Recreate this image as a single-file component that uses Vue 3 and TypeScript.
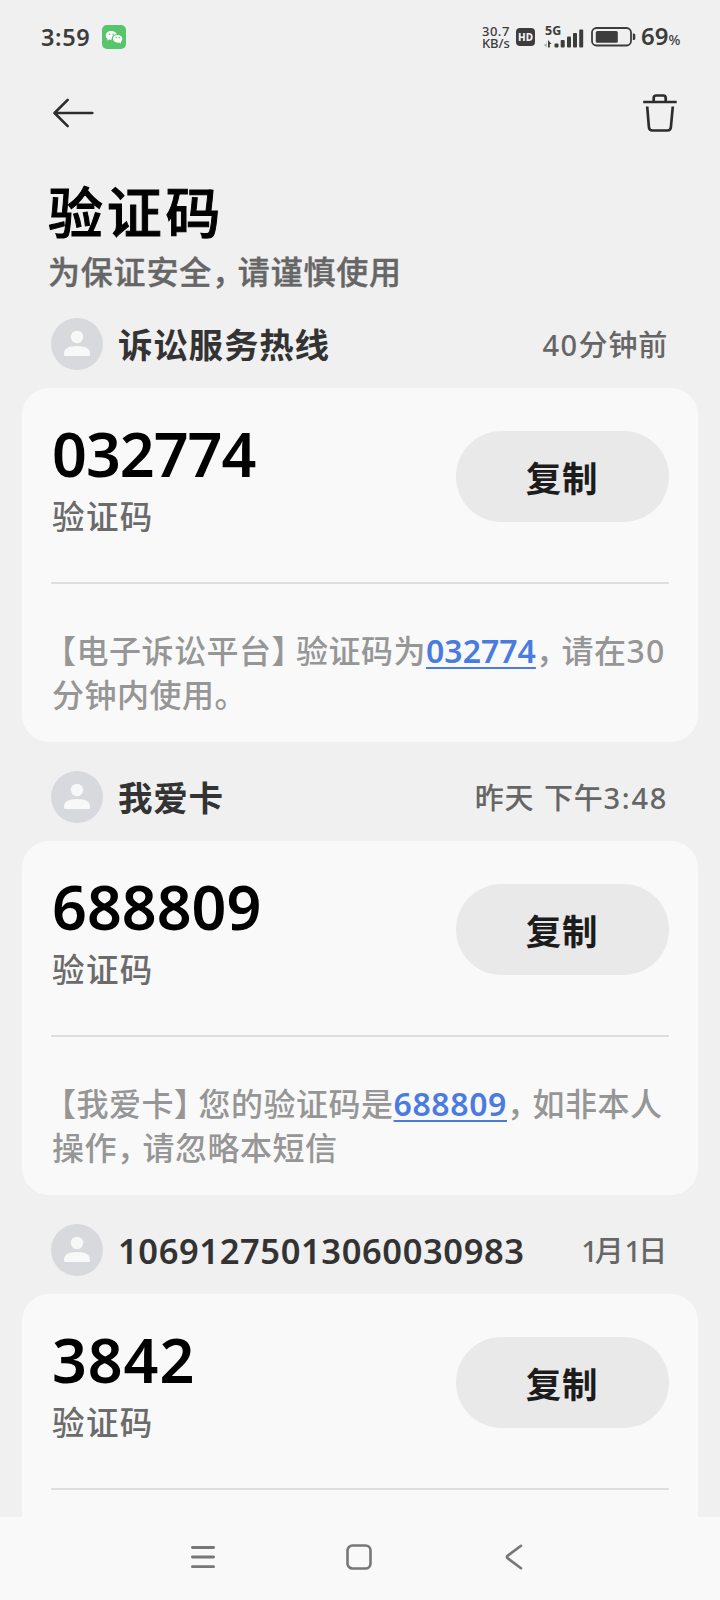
<script setup lang="ts">
interface Segment {
  text: string
  kind?: 'open' | 'close' | 'comma' | 'link' | 'digits'
  spacing?: number
}

interface Message {
  sender: string
  senderSpacing: number
  time: Segment[]
  code: string
  codeSpacing: number
  lines: Segment[][]
}

const messages: Message[] = [
  {
    sender: '诉讼服务热线',
    senderSpacing: 0.8,
    time: [{ text: '40', kind: 'digits', spacing: 1.4 }, { text: '分钟前' }],
    code: '032774',
    codeSpacing: -1,
    lines: [
      [
        { text: '【', kind: 'open' },
        { text: '电子诉讼平台' },
        { text: '】', kind: 'close' },
        { text: '验证码为' },
        { text: '032774', kind: 'link', spacing: 0 },
        { text: '，', kind: 'comma' },
        { text: '请在' },
        { text: '30', kind: 'digits', spacing: 1.2 },
      ],
      [{ text: '分钟内使用。' }],
    ],
  },
  {
    sender: '我爱卡',
    senderSpacing: 0.7,
    time: [
      { text: '昨天' },
      { text: ' ', kind: 'digits', spacing: 2 },
      { text: '下午' },
      { text: '3:48', kind: 'digits', spacing: 1.7 },
    ],
    code: '688809',
    codeSpacing: 0,
    lines: [
      [
        { text: '【', kind: 'open' },
        { text: '我爱卡' },
        { text: '】', kind: 'close' },
        { text: '您的验证码是' },
        { text: '688809', kind: 'link', spacing: 0.6 },
        { text: '，', kind: 'comma' },
        { text: '如非本人' },
      ],
      [
        { text: '操作' },
        { text: '，', kind: 'comma' },
        { text: '请忽略本短信' },
      ],
    ],
  },
  {
    sender: '10691275013060030983',
    senderSpacing: 0.6,
    time: [
      { text: '1', kind: 'digits', spacing: -3 },
      { text: '月' },
      { text: '1', kind: 'digits', spacing: -3 },
      { text: '日' },
    ],
    code: '3842',
    codeSpacing: 0.9,
    lines: [],
  },
]

const spacing = (n?: number) => (n === undefined ? {} : { letterSpacing: n + 'px' })
</script>

<template>
  <div class="screen">
    <header class="status">
      <span class="clock">3:59</span>
      <svg class="wechat" width="24" height="24" viewBox="0 0 24 24">
        <rect width="24" height="24" rx="5" fill="#57c56b" />
        <path fill="#fff" d="M9.2 6C6 6 3.8 8 3.8 10.5c0 1.4.7 2.6 1.8 3.4l-.4 1.8 2-1.1c.8.2 1.6.3 2.5.2-.6-3.2 2-5.7 5.2-5.6C14.3 7.3 12 6 9.2 6z" />
        <path fill="#fff" d="M20.3 13.8c0-2.2-2-3.9-4.6-3.9s-4.7 1.7-4.7 3.9 2.1 3.9 4.7 3.9c.6 0 1.2-.1 1.700-.2l1.700.9-.4-1.500c1-.8 1.600-1.900 1.600-3.100z" />
        <g fill="#57c56b"><circle cx="7.500" cy="9.200" r=".8" /><circle cx="11" cy="9.200" r=".8" /><circle cx="14.200" cy="12.700" r=".7" /><circle cx="17.300" cy="12.700" r=".7" /></g>
      </svg>
      <span class="grow"></span>
      <span class="rate"><span class="rate-value">30.7</span><span>KB/s</span></span>
      <span class="hd">HD</span>
      <span class="network">
        <span class="gen">5G</span>
        <svg width="42" height="22" viewBox="0 0 42 22" fill="#3c3c3c">
          <path d="M3.500 14v7.500L.8 18.500H3z" fill="#999" />
          <path d="M5 21.500V14l3.500 4H6.800v3.500z" />
          <rect x="11.500" y="17.500" width="4" height="4" rx="1" />
          <rect x="17.700" y="14" width="4" height="7.500" rx="1" />
          <rect x="24" y="10.500" width="4" height="11" rx="1" />
          <rect x="30" y="7" width="4" height="14.500" rx="1" />
          <rect x="36.200" y="3.500" width="4" height="18" rx="1" />
        </svg>
      </span>
      <svg class="battery" width="45" height="20" viewBox="0 0 45 20">
        <rect x="1" y="1" width="39" height="17.500" rx="4.500" fill="none" stroke="#3c3c3c" stroke-width="1.800" />
        <rect x="4.800" y="4" width="22" height="11.800" rx="1.500" fill="#3c3c3c" />
        <path d="M41.800 6.500h1a1.500 1.500 0 0 1 1.500 1.500v3.500a1.500 1.500 0 0 1-1.500 1.500h-1z" fill="#3c3c3c" />
      </svg>
      <span class="percent">69<small>%</small></span>
    </header>

    <nav class="toolbar">
      <svg width="42" height="32" viewBox="0 0 42 32" fill="none" stroke="#2d2d2d" stroke-width="2.600" stroke-linecap="round" stroke-linejoin="round">
        <path d="M15.700 2.800 2.500 16l13.200 13.200M2.500 16h37.800" />
      </svg>
      <svg width="36" height="40" viewBox="0 0 36 40" fill="none" stroke="#2d2d2d" stroke-width="2.700" stroke-linejoin="round">
        <path d="M1.200 9h33.500M11.700 8.500V5q0-2.500 2.500-2.500h7q2.500 0 2.500 2.500V8.500" />
        <path d="M5.200 13.500l1.700 20.500q.2 3.500 3.500 3.500h15q3.300 0 3.500-3.500L30.800 13.500" />
      </svg>
    </nav>

    <section class="heading">
      <h1>验证码</h1>
      <p>为保证安全<span class="comma">，</span>请谨慎使用</p>
    </section>

    <main class="list">
      <article v-for="m in messages" :key="m.code" class="item">
        <div class="item-head">
          <svg class="avatar" width="52" height="52" viewBox="0 0 52 52">
            <circle cx="26" cy="26" r="26" fill="#d8d9dc" />
            <circle cx="26" cy="19" r="6.200" fill="#f8f8f9" />
            <path d="M13 35.500q0-7.500 13-7.500t13 7.500v1q0 1.500-1.500 1.500h-23q-1.500 0-1.500-1.500z" fill="#f8f8f9" />
          </svg>
          <span class="sender" :style="spacing(m.senderSpacing)">{{ m.sender }}</span>
          <span class="time"><span v-for="(s, i) in m.time" :key="i" :style="spacing(s.spacing)">{{ s.text }}</span></span>
        </div>
        <div class="card">
          <div class="summary">
            <div class="code-block">
              <div class="code" :style="spacing(m.codeSpacing)">{{ m.code }}</div>
              <div class="label">验证码</div>
            </div>
            <button class="copy" type="button">复制</button>
          </div>
          <div class="message">
            <div v-for="(line, i) in m.lines" :key="i" class="line"><span v-for="(s, j) in line" :key="j" :class="s.kind" :style="spacing(s.spacing)">{{ s.text }}</span></div>
          </div>
        </div>
      </article>
    </main>

    <footer class="navbar">
      <svg width="26" height="26" viewBox="0 0 26 26" stroke="#777" stroke-width="2.800" stroke-linecap="round">
        <path d="M2.400 3.500h21.200M2.400 13h21.200M2.400 22.700h21.200" />
      </svg>
      <svg width="26" height="26" viewBox="0 0 26 26" fill="none" stroke="#777" stroke-width="2.600">
        <rect x="1.500" y="1.500" width="23" height="23" rx="5" />
      </svg>
      <svg width="26" height="26" viewBox="0 0 26 26" fill="none" stroke="#777" stroke-width="2.600" stroke-linecap="round" stroke-linejoin="round">
        <path d="M20 1.800 6.800 11.600q-1.800 1.400 0 2.800L20 24.200" />
      </svg>
    </footer>
  </div>
</template>

<style>
body {
  margin: 0;
  background: #f0f0f0;
}
</style>

<style scoped>
.screen {
  width: 720px;
  height: 1600px;
  box-sizing: border-box;
  display: flex;
  flex-direction: column;
  overflow: hidden;
  background: #f0f0f0;
  color: #000;
  font-family: "Noto Sans", "Noto Sans CJK SC", sans-serif;
}
.status {
  flex: none;
  height: 74px;
  padding: 0 39px 0 41px;
  display: flex;
  align-items: center;
  color: #3c3c3c;
  box-sizing: border-box;
}
.clock {
  font-size: 23.5px;
  line-height: 28px;
  font-weight: 600;
  letter-spacing: 0.6px;
}
.wechat { margin-left: 12px; }
.grow { flex: 1; }
.rate {
  display: flex;
  flex-direction: column;
  width: 29px;
  font-size: 13px;
  line-height: 12px;
  font-weight: 500;
  letter-spacing: -0.1px;
}
.rate-value { letter-spacing: 0.5px; }
.hd {
  width: 19px;
  height: 18px;
  margin-left: 5px;
  border-radius: 4px;
  background: #3c3c3c;
  color: #f0f0f0;
  font-size: 10px;
  font-weight: 800;
  line-height: 18px;
  text-align: center;
}
.network {
  display: grid;
  width: 42px;
  height: 22px;
  margin-left: 8px;
}
.network > * { grid-area: 1 / 1; }
.gen {
  padding-left: 2px;
  font-size: 12.5px;
  font-weight: 700;
  line-height: 10px;
}
.battery { margin-left: 6px; }
.percent {
  width: 40px;
  margin-left: 5px;
  padding-top: 2px;
  font-size: 24px;
  font-weight: 600;
  line-height: 28px;
  white-space: nowrap;
}
.percent small { font-size: 14px; font-weight: 500; }

.toolbar {
  flex: none;
  height: 78px;
  padding: 0 42px 0 52px;
  display: flex;
  align-items: center;
  justify-content: space-between;
}
.heading {
  flex: none;
  height: 166px;
  padding: 23px 0 0 48px;
  box-sizing: border-box;
}
h1 {
  margin: 0;
  font-size: 55px;
  line-height: 74px;
  font-weight: 500;
  letter-spacing: 3.8px;
  -webkit-text-stroke: 1px #000;
}
.heading p {
  margin: 0;
  padding-top: 1px;
  font-size: 32px;
  line-height: 44px;
  font-weight: 500;
  letter-spacing: 0.8px;
  color: #666;
  -webkit-text-stroke: 0.4px #666;
}
.open, .close, .comma { font-feature-settings: "halt"; }
.comma { margin-right: 9px; }
.open { margin-left: 8px; }
.close { margin-right: 8px; }

.list {
  flex: 1;
  min-height: 0;
  overflow: hidden;
}
.item { height: 453px; }
.item-head {
  height: 70px;
  padding: 0 52px 0 51px;
  display: flex;
  align-items: flex-start;
}
.avatar { flex: none; }
.sender {
  margin-left: 15px;
  padding-top: 1px;
  font-size: 34.5px;
  line-height: 52px;
  font-weight: 600;
  color: #333;
  white-space: nowrap;
}
.time {
  margin-left: auto;
  padding-top: 1px;
  font-size: 29px;
  line-height: 52px;
  font-weight: 500;
  letter-spacing: 0.8px;
  color: #666;
  white-space: pre;
}
.card {
  height: 354px;
  margin: 0 22px;
  padding: 0 29px;
  box-sizing: border-box;
  border-radius: 27px;
  background: #f9f9f9;
}
.summary {
  height: 196px;
  padding-top: 43px;
  box-sizing: border-box;
  border-bottom: 2px solid #dedede;
  display: flex;
  justify-content: space-between;
  align-items: flex-start;
}
.code-block { padding-left: 1px; }
.code {
  font-size: 61px;
  line-height: 46px;
  font-weight: 600;
}
.label {
  margin-top: 18px;
  font-size: 32.5px;
  line-height: 44px;
  font-weight: 500;
  letter-spacing: 1.4px;
  color: #6b6b6b;
}
.copy {
  width: 213px;
  height: 91px;
  padding: 3px 1px 0 0;
  border: 0;
  border-radius: 46px;
  background: #e9e9e9;
  color: #1c1c1c;
  font-family: inherit;
  font-size: 35.5px;
  line-height: 88px;
  font-weight: 600;
  letter-spacing: 0.8px;
}
.message {
  padding: 45px 0 0 1px;
  font-size: 32px;
  font-weight: 500;
  color: #969696;
  letter-spacing: 0.5px;
  white-space: nowrap;
}
.line { height: 44px; line-height: 44px; }
.link {
  color: #4a7be0;
  font-weight: 600;
  text-decoration: underline;
  text-decoration-thickness: 2px;
  text-underline-offset: 4px;
}
.navbar {
  flex: none;
  height: 83px;
  padding: 0 193px 3px 190px;
  box-sizing: border-box;
  display: flex;
  align-items: center;
  justify-content: space-between;
  background: #f9f9f9;
}
</style>
